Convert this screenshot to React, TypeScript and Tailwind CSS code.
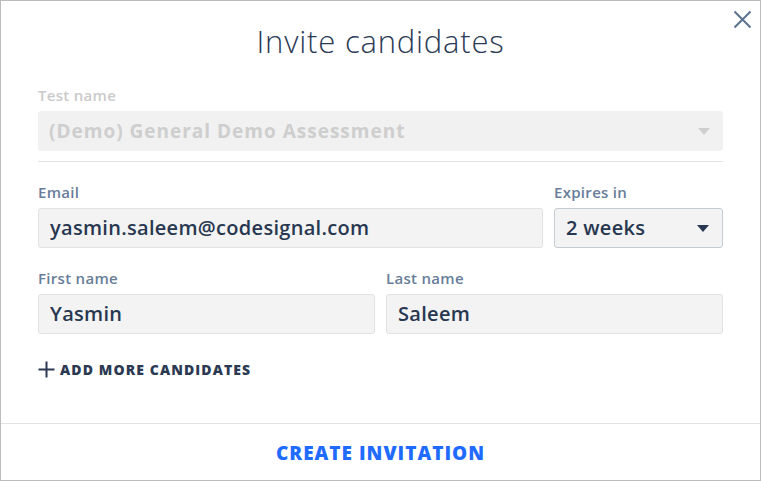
import React from 'react';

const Caret: React.FC<{ className?: string }> = ({ className }) => (
  <svg width="12" height="7" viewBox="0 0 12 7" className={className}>
    <path d="M0 0h12L6 7z" fill="currentColor" />
  </svg>
);

const Field: React.FC<{ label: string; value: string; className?: string }> = ({ label, value, className }) => (
  <div className={className}>
    <div className="text-[15px] leading-[16px] font-semibold tracking-[0.3px] text-[#687d99]">{label}</div>
    <div className="mt-[8px] h-[40px] rounded-[3px] border border-[#e2e2e2] bg-[#f3f3f3] px-[11px] flex items-center text-[20px] font-semibold tracking-[0.3px] text-[#283750]">
      {value}
    </div>
  </div>
);

export default function App() {
  return (
    <div
      className="relative w-[761px] h-[481px] bg-white border border-[#bcbcbc] flex flex-col"
      style={{ fontFamily: '"Open Sans", sans-serif' }}
    >
      {/* close */}
      <button className="absolute top-[9px] right-[8px] text-[#5b7391]">
        <svg width="19" height="19" viewBox="0 0 19 19">
          <path d="M1.5 1.5l16 16M17.5 1.5l-16 16" stroke="currentColor" strokeWidth="2" />
        </svg>
      </button>

      <div className="flex-1 px-[37px] pt-[22px]">
        <h1 className="text-center text-[31px] leading-[36px] font-light tracking-[0.8px] text-[#2b3a55]">Invite candidates</h1>

        <div className="mt-[28px] text-[15px] leading-[16px] font-semibold tracking-[0.3px] text-[#cacaca]">Test name</div>
        <div className="mt-[8px] h-[40px] rounded-[3px] bg-[#f1f1f1] pl-[11px] pr-[13px] flex items-center justify-between">
          <span className="text-[19px] font-bold tracking-[1px] text-[#cecece]">(Demo) General Demo Assessment</span>
          <Caret className="text-[#cfcfcf]" />
        </div>

        <div className="mt-[10px] h-px bg-[#e3e3e3]" />

        <div className="mt-[22px] flex gap-[11px]">
          <Field label="Email" value="yasmin.saleem@codesignal.com" className="flex-1" />
          <div className="w-[169px]">
            <div className="text-[15px] leading-[16px] font-semibold tracking-[0.3px] text-[#687d99]">Expires in</div>
            <div className="mt-[8px] h-[40px] rounded-[3px] border border-[#c5cbd2] bg-[#f3f3f3] pl-[11px] pr-[13px] flex items-center justify-between text-[20px] font-semibold tracking-[0.3px] text-[#283750]">
              <span>2 weeks</span>
              <Caret className="text-[#283750]" />
            </div>
          </div>
        </div>

        <div className="mt-[22px] grid grid-cols-2 gap-[11px]">
          <Field label="First name" value="Yasmin" />
          <Field label="Last name" value="Saleem" />
        </div>

        <button className="mt-[27px] flex items-center gap-[5px] text-[14px] leading-[16px] font-extrabold tracking-[1.1px] text-[#2b3a52]">
          <svg width="17" height="17" viewBox="0 0 17 17">
            <path d="M8.5 0.5v16M0.5 8.5h16" stroke="currentColor" strokeWidth="2" />
          </svg>
          ADD MORE CANDIDATES
        </button>
      </div>

      <div className="h-[57px] border-t border-[#e2e2e2] flex items-center justify-center">
        <span className="text-[19px] font-extrabold tracking-[1px] text-[#1f6bff] pt-[3px]">CREATE INVITATION</span>
      </div>
    </div>
  );
}
